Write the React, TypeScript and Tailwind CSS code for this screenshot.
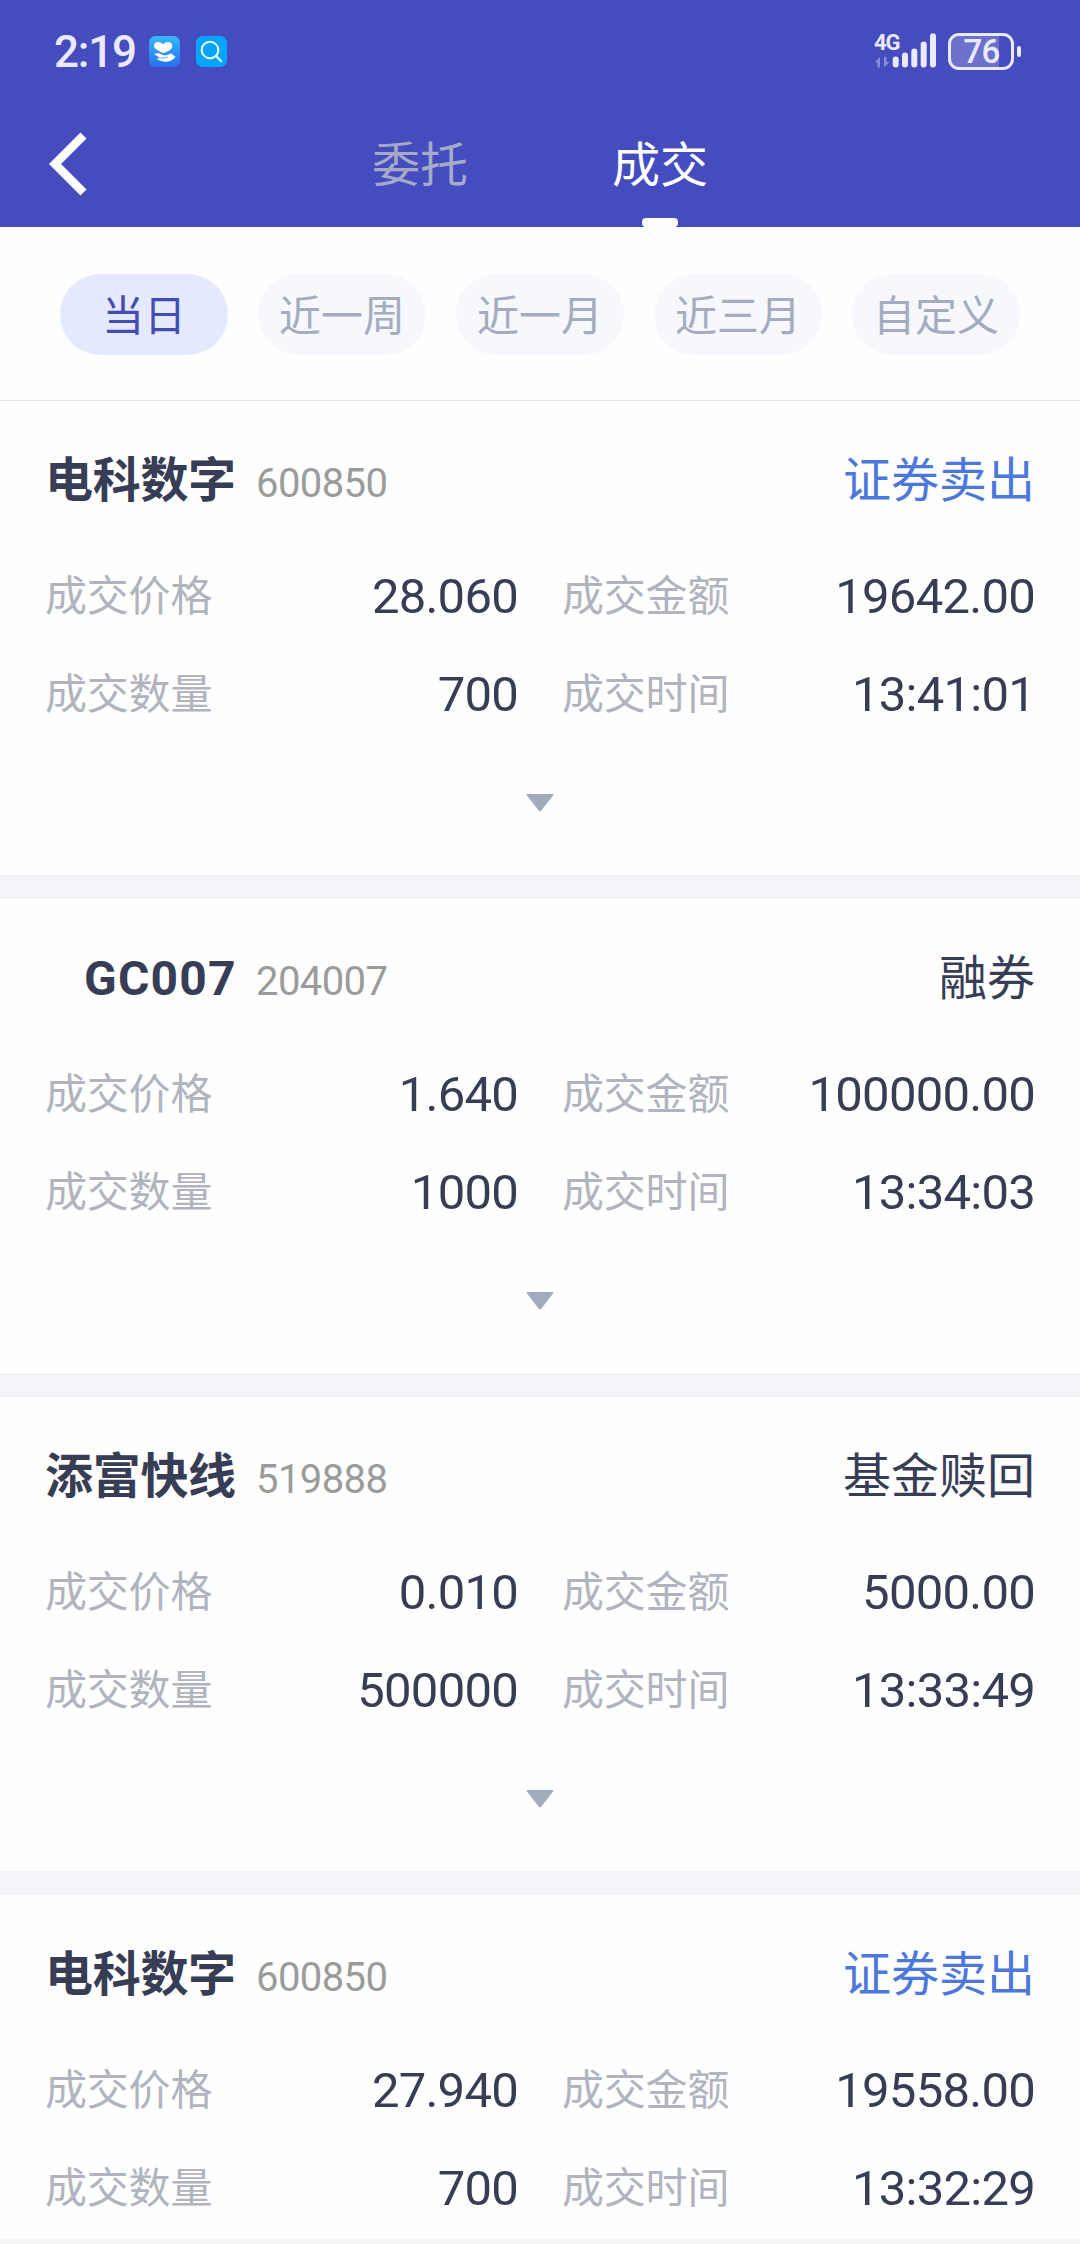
import React from 'react';

interface Trade {
  name: string;
  code: string;
  action: string;
  tone: 'sell' | 'default';
  price: string;
  amount: string;
  quantity: string;
  time: string;
  indent?: boolean;
}

const trades: Trade[] = [
  { name: '电科数字', code: '600850', action: '证券卖出', tone: 'sell', price: '28.060', amount: '19642.00', quantity: '700', time: '13:41:01' },
  { name: 'GC007', code: '204007', action: '融券', tone: 'default', price: '1.640', amount: '100000.00', quantity: '1000', time: '13:34:03', indent: true },
  { name: '添富快线', code: '519888', action: '基金赎回', tone: 'default', price: '0.010', amount: '5000.00', quantity: '500000', time: '13:33:49' },
  { name: '电科数字', code: '600850', action: '证券卖出', tone: 'sell', price: '27.940', amount: '19558.00', quantity: '700', time: '13:32:29' },
];

const ranges = ['当日', '近一周', '近一月', '近三月', '自定义'];

function StatusBar() {
  return (
    <div className="flex h-[102px] items-center pl-[54px] pr-[59px] text-[#ebe9ff]">
      <span className="w-[95px] pt-px text-[44px] font-medium leading-none tracking-[-1.2px]">2:19</span>
      <svg width="31" height="31" viewBox="0 0 31 31">
        <defs>
          <linearGradient id="care" x1="0" y1="0" x2="0" y2="1">
            <stop offset="0" stopColor="#35b8f8" />
            <stop offset="1" stopColor="#2670f0" />
          </linearGradient>
        </defs>
        <rect width="31" height="31" rx="6.5" fill="url(#care)" />
        <path d="M14.5 17C10 15.2 5 12.5 5 9.900C5 7.400 6.700 6 8.900 6c2.200 0 4 .9 5.300 2.400C15.300 6.900 16.900 6 19 6c2.500 0 4.300 1.700 4.300 4.100 0 3.300-4 5.900-8.800 6.900z" fill="#fff" />
        <path d="M5 18c3-1.500 6-.9 8.300.8 2 .8 3.700.6 5.200-.1l4-1.200 4 3.400c-2.500 3.100-6 4.900-10.500 4.800-3.700-.1-6.200-1.300-8.700-3.100l4-.3C9 20.500 7.200 19.200 5 18z" fill="#fff" />
        <path d="M11.500 21.700c2.500.7 5 .4 7.500-.8" fill="none" stroke="#2f8bf4" strokeWidth="0.8" />
      </svg>
      <svg className="ml-4" width="31" height="31" viewBox="0 0 31 31">
        <rect width="31" height="31" rx="6.5" fill="#05a4ff" />
        <circle cx="14" cy="14" r="8.3" fill="none" stroke="#eaffff" strokeWidth="2" />
        <path d="M20 20l5 5" stroke="#eaffff" strokeWidth="2.2" strokeLinecap="round" />
      </svg>

      <div className="ml-auto flex items-center">
        <div className="relative h-[36px] w-[64px]">
          <span className="absolute left-0 top-0 text-[22px] font-bold leading-[20px] tracking-[-1.2px]">4G</span>
          <svg className="absolute left-0 top-0" width="64" height="36" viewBox="0 0 64 36" fill="currentColor">
            <g opacity="0.4">
              <path d="M0.5 29.5L6 24v10.500H3.500v-5z" />
              <path d="M15.500 29L10 34.500V24h2.500v5z" />
            </g>
            <rect x="18.700" y="23.500" width="6" height="11" rx="3" />
            <rect x="28" y="19.500" width="6" height="15" rx="3" />
            <rect x="37.300" y="15.500" width="6" height="19" rx="3" />
            <rect x="46.700" y="8.500" width="6" height="26" rx="3" />
            <rect x="56" y="0.300" width="6" height="34.200" rx="3" />
          </svg>
        </div>
        <div className="ml-[10px] h-[37px] w-[66px] overflow-hidden rounded-[11px] border-[3px] border-[#ebe9ff] bg-linear-to-r from-[#6c72cb] from-80% to-transparent to-80%">
          <div className="flex h-full items-center justify-center pl-px text-[33px] font-medium leading-none tracking-[-0.8px]">76</div>
        </div>
        <div className="ml-[3px] h-[11px] w-[4px] rounded-[2px] bg-[#ebe9ff]" />
      </div>
    </div>
  );
}

function Header() {
  return (
    <div className="grid h-[125px] grid-cols-[300px_1fr_300px]">
      <div className="pl-[48px] pt-[30px]">
        <svg width="40" height="64" viewBox="0 0 40 64" fill="none" stroke="#fff" strokeWidth="8.5">
          <path d="M35.500 3.500L7 32l28.500 28.500" />
        </svg>
      </div>
      <div className="grid grid-cols-2 text-center text-[48px] leading-[127px]">
        <div className="text-[#a4aac8]">委托</div>
        <div className="relative h-[125px] text-white">
          成交
          <span className="absolute bottom-0 left-[102px] h-[9px] w-[36px] rounded-[4px] bg-white" />
        </div>
      </div>
    </div>
  );
}

function Field({ label, value }: { label: string; value: string }) {
  return (
    <div className="flex h-[98px] items-center justify-between">
      <span className="text-[42px] tracking-[-0.2px] text-[#b1b4be]">{label}</span>
      <span className="pt-px text-[49px] tracking-[-0.75px] text-[#383d56]">{value}</span>
    </div>
  );
}

function TradeCard({ trade }: { trade: Trade }) {
  return (
    <section className="h-[498px] shrink-0 border-b-[24px] border-[#f3f4f7] px-[45px] pt-8">
      <div className="flex h-24 items-baseline text-[48px] leading-[96px]">
        <h2
          className={
            trade.indent
              ? 'w-[192px] pl-[39px] font-bold tracking-[1.2px] text-[#383d56]'
              : 'w-[192px] font-bold tracking-[-0.3px] text-[#383d56]'
          }
        >
          {trade.name}
        </h2>
        <span className="ml-[19px] text-[40px] tracking-[-0.6px] text-[#9b9b9b]">{trade.code}</span>
        <span className={trade.tone === 'sell' ? 'ml-auto text-[#4c78dc]' : 'ml-auto text-[#383d56]'}>{trade.action}</span>
      </div>
      <div className="mt-[18px] grid grid-cols-[473px_473px] justify-between">
        <Field label="成交价格" value={trade.price} />
        <Field label="成交金额" value={trade.amount} />
        <Field label="成交数量" value={trade.quantity} />
        <Field label="成交时间" value={trade.time} />
      </div>
      <svg className="mx-auto mt-[51px]" width="28" height="18" viewBox="0 0 28 18">
        <path d="M1.5 0h25q1.500 0 .6 1.500L15.200 16.800q-1.200 1.200-2.400 0L.9 1.500Q0 0 1.500 0z" fill="#a1abbf" />
      </svg>
    </section>
  );
}

export default function App() {
  return (
    <div className="flex h-[2244px] w-[1080px] flex-col overflow-hidden bg-[#fefefe] font-['Roboto','Noto_Sans_CJK_SC',sans-serif]">
      <header className="h-[227px] shrink-0 bg-[#444cbe]">
        <StatusBar />
        <Header />
      </header>

      <nav className="flex h-[174px] shrink-0 gap-[30px] border-b border-[#e1e3e5] px-[60px] pt-[47px]">
        {ranges.map((range, i) => (
          <button
            key={range}
            className={
              i === 0
                ? 'h-[81px] w-[168px] rounded-full bg-[#e5e9fe] pt-[3px] text-[42px] text-[#444cb2]'
                : 'h-[81px] w-[168px] rounded-full bg-[#f6f8fd] pt-[3px] text-[42px] text-[#a4adbf]'
            }
          >
            {range}
          </button>
        ))}
      </nav>

      <main className="flex min-h-0 flex-1 flex-col overflow-hidden">
        {trades.map(trade => (
          <TradeCard key={trade.time} trade={trade} />
        ))}
      </main>

      <footer className="h-[5px] shrink-0 bg-[#f3f5f8]" />
    </div>
  );
}
